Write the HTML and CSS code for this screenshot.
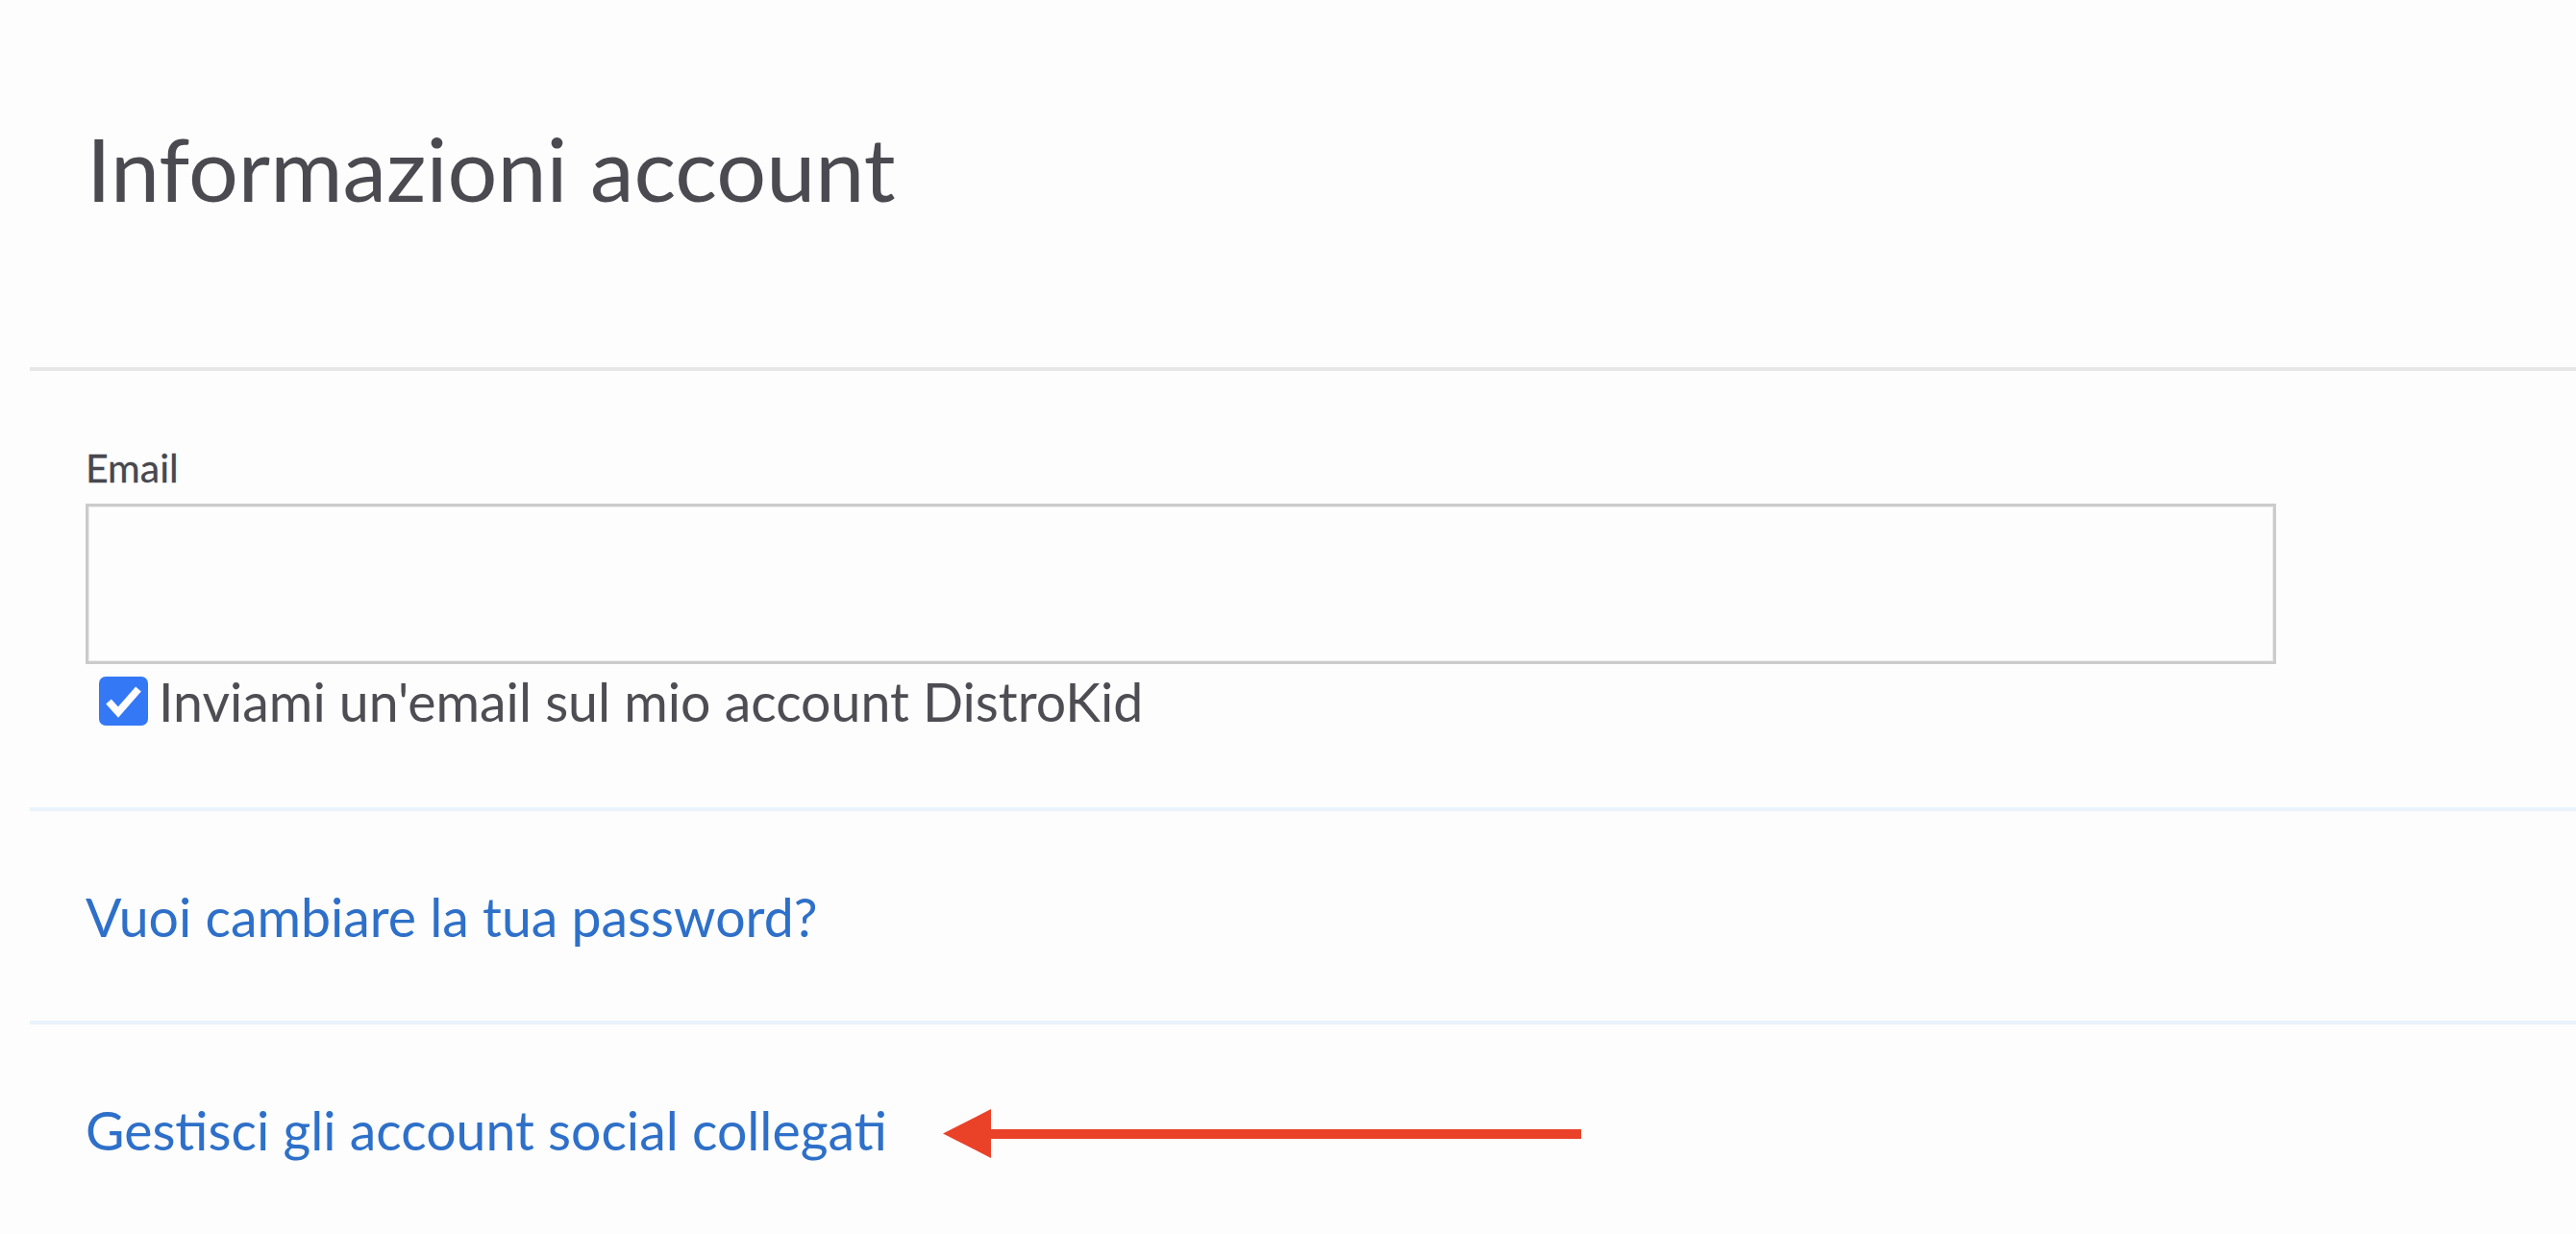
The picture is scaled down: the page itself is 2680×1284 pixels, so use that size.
FILE: index.html
```html
<!DOCTYPE html>
<html lang="it">
<head>
<meta charset="utf-8">
<title>Informazioni account</title>
<link rel="stylesheet" href="styles.css">
</head>
<body>
<main class="account">
  <header class="account-head">
    <h1 class="title">Informazioni account</h1>
  </header>

  <section class="block block-email">
    <label class="field-label" for="email">Email</label>
    <input class="field-input" id="email" type="text">
    <label class="check-row">
      <span class="check-box" aria-hidden="true">
        <svg viewBox="0 0 51 51" width="51" height="51">
          <polyline points="10,26 20,37 41,13" fill="none" stroke="#ffffff" stroke-width="7.5" stroke-linejoin="miter"/>
        </svg>
      </span>
      <span class="check-text">Inviami un'email sul mio account DistroKid</span>
    </label>
  </section>

  <section class="block block-link">
    <a class="link" href="#">Vuoi cambiare la tua password?</a>
  </section>

  <section class="block block-link">
    <div class="link-row">
      <a class="link" href="#">Gestisci gli account social collegati</a>
      <svg class="arrow" viewBox="0 0 664 51" width="664" height="51" aria-hidden="true">
        <polygon points="0,25.5 50,0 50,51" fill="#ea4129"/>
        <rect x="49" y="21" width="615" height="10" fill="#ea4129"/>
      </svg>
    </div>
  </section>
</main>
</body>
</html>
```

FILE: styles.css
```css
html, body {
  margin: 0;
  padding: 0;
  background: #fdfdfd;
}

body {
  font-family: Lato, "Noto Sans", "Liberation Sans", sans-serif;
  color: #4c4c52;
  width: 2680px;
  height: 1284px;
  overflow: hidden;
}

.account {
  margin-left: 31px;
}

.account-head {
  height: 382px;
  box-sizing: border-box;
  padding: 120px 0 0 59px;
}

.title {
  margin: 0;
  font-size: 91.6px;
  line-height: 111px;
  font-weight: 400;
  color: #4a4a50;
}

.block {
  box-sizing: border-box;
  padding-left: 58px;
  padding-top: 76px;
}

.block-email {
  border-top: 4px solid #e6e6e6;
  height: 458px;
}

.block-link {
  border-top: 4px solid #eaf2fc;
  height: 222px;
}

.field-label {
  display: block;
  font-size: 41px;
  line-height: 1.2;
  color: #48484e;
  -webkit-text-stroke: 0.3px #48484e;
}

.field-input {
  display: block;
  box-sizing: border-box;
  width: 2279px;
  height: 167px;
  margin: 13px 0 0 0;
  border: 3px solid #cbcbcb;
  box-shadow: inset 0 0 0 1px #ececec;
  background: #fdfdfd;
  padding: 0 20px;
  font: inherit;
  outline: none;
}

.check-row {
  display: flex;
  align-items: center;
  margin-top: 5px;
  padding-left: 14px;
  gap: 11px;
}

.check-box {
  width: 51px;
  height: 51px;
  border-radius: 7px;
  background: #3478f6;
  display: flex;
  flex: none;
}

.check-box svg {
  display: block;
}

.check-text {
  font-size: 55.4px;
  line-height: 67px;
  color: #4d4d53;
}

.link {
  font-size: 55.4px;
  line-height: 67px;
  color: #2e70c9;
  text-decoration: none;
}

.link-row {
  display: flex;
  align-items: center;
  gap: 58px;
}

.arrow {
  display: block;
  flex: none;
  margin-top: 8px;
}
```
